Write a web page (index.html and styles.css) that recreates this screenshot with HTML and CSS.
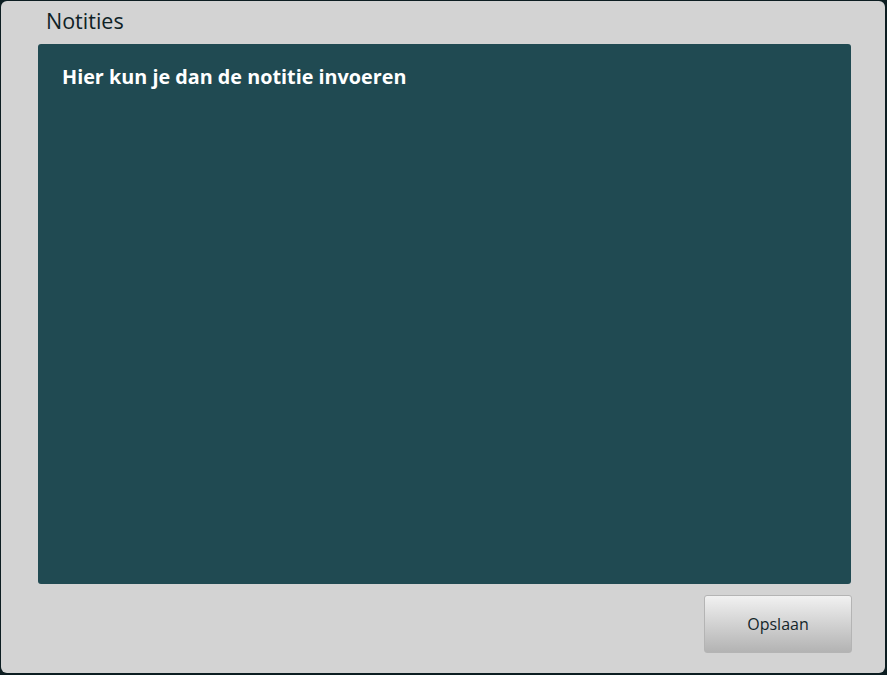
FILE: index.html
```html
<!DOCTYPE html>
<html>
<head>
<meta charset="utf-8">
<link rel="stylesheet" href="styles.css">
</head>
<body>
<div class="frame">
  <h1 class="title">Notities</h1>
  <div class="panel">
    <p class="placeholder">Hier kun je dan de notitie invoeren</p>
  </div>
  <div class="actions">
    <button class="btn">Opslaan</button>
  </div>
</div>
</body>
</html>
```
FILE: styles.css
```css
html, body {
  margin: 0;
  padding: 0;
  background: #0c1d21;
}
body {
  width: 887px;
  height: 675px;
  padding: 1px 2px 2px 1px;
  box-sizing: border-box;
}
.frame {
  height: 100%;
  background: #d3d3d3;
  border-radius: 6px;
  box-sizing: border-box;
  padding: 0 34px 0 37px;
  display: flex;
  flex-direction: column;
}
.title {
  margin: 0;
  padding: 7px 0 0 8px;
  height: 43px;
  box-sizing: border-box;
  font-family: "Open Sans", sans-serif;
  font-weight: 400;
  font-size: 21.5px;
  line-height: 26px;
  color: #0f2226;
}
.panel {
  height: 540px;
  background: #204a52;
  border-radius: 3px;
  padding: 19px 24px;
  box-sizing: border-box;
}
.placeholder {
  margin: 0;
  font-family: "Open Sans", sans-serif;
  font-weight: 700;
  font-size: 19.8px;
  line-height: 28px;
  color: #ffffff;
}
.actions {
  display: flex;
  justify-content: flex-end;
  padding-top: 11px;
  margin-right: -1px;
}
.btn {
  width: 148px;
  height: 58px;
  border: 1px solid #b4b4b4;
  border-radius: 3px;
  background: linear-gradient(#f1f1f1, #b3b3b3);
  font-family: "Open Sans", sans-serif;
  font-size: 16px;
  color: #14262a;
  padding: 0;
}
```
